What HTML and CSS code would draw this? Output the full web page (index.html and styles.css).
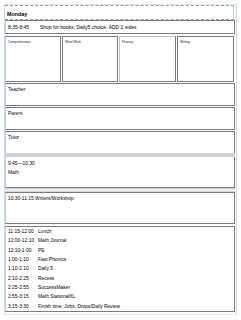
FILE: index.html
```html
<!DOCTYPE html>
<html>
<head>
<meta charset="utf-8">
<link rel="stylesheet" href="styles.css">
</head>
<body>
<div class="page">
  <div class="day">Monday</div>
  <div class="slot"><span class="t">8:35-8:45</span><span>Shop for books, Daily5 choice, ADD 2 sides</span></div>
  <div class="grid">
    <div class="cell">Comprehension</div>
    <div class="cell">Word Work</div>
    <div class="cell light">Fluency</div>
    <div class="cell">Writing</div>
  </div>
  <div class="box note">Teacher</div>
  <div class="box note">Parent</div>
  <div class="box note tutor">Tutor</div>
  <div class="band"></div>
  <div class="box math"><div>9:45—10:30</div><div>Math</div></div>
  <div class="band2"></div>
  <div class="box writers">10:30-11:15 Writers/Workshop</div>
  <div class="box sched">
    <div class="row"><span class="t">11:15-12:00</span><span>Lunch</span></div>
    <div class="row"><span class="t">12:00-12:10</span><span>Math Journal</span></div>
    <div class="row"><span class="t">12:10-1:00</span><span>PE</span></div>
    <div class="row"><span class="t">1:00-1:10</span><span>Fast Phonics</span></div>
    <div class="row"><span class="t">1:10-2:10</span><span>Daily 5</span></div>
    <div class="row"><span class="t">2:10-2:25</span><span>Recess</span></div>
    <div class="row"><span class="t">2:25-2:55</span><span>SuccessMaker</span></div>
    <div class="row"><span class="t">2:55-3:15</span><span>Math StationalXL</span></div>
    <div class="row"><span class="t">3:15-3:30</span><span>Finish time, Jobs, Drops/Daily Review</span></div>
  </div>
</div>
</body>
</html>
```
FILE: styles.css
```css
html, body { margin: 0; padding: 0; background: #fff; }
body { font-family: "Liberation Sans", Arial, sans-serif; color: #000; font-size: 4.9px; }
.page {
  margin: 4px 0 0 4px;
  width: 231px;
  border-left: 1px solid #c9dcef;
  border-right: 1px solid #c9dcef;
  border-top: 1px solid #dbe7f3;
  padding-bottom: 2px;
  border-bottom: 1px solid #dbe7f3;
}
.day {
  height: 15px;
  border-top: 1px dashed #9a9a9a;
  border-bottom: 1px dashed #9a9a9a;
  border-right: 1px dashed #c8c8c8;
  font-weight: bold;
  font-size: 5.4px;
  line-height: 16px;
  padding-left: 2px;
  box-sizing: border-box;
  margin-right: 2px;
}
.slot {
  height: 14px;
  box-sizing: border-box;
  border: 1px solid #7a7a7a;
  border-left-color: #b9cde2;
  display: flex;
  align-items: center;
  padding-left: 2px;
  font-size: 5px;
  margin-right: 1px;
}
.slot .t { width: 32px; }
.grid {
  margin-top: 2px;
  display: grid;
  grid-template-columns: 56px 56px 57px 57px;
  gap: 1px;
  height: 46px;
  margin-right: 1px;
}
.cell {
  border: 1px solid #7a7a7a;
  font-size: 3.2px;
  padding: 3px 2px;
  color: #222;
}
.cell:first-child { border-left-color: #b9cde2; }
.cell.light { border-color: #c4c4c4 #7a7a7a #7a7a7a #c4c4c4; }
.box {
  box-sizing: border-box;
  border: 1px solid #7a7a7a;
  border-left-color: #b9cde2;
  padding: 3px 2px;
  margin-right: 1px;
}
.note { height: 23px; margin-top: 1px; }
.tutor { height: 22px; border-bottom: none; }
.band { height: 4px; background: #d3d3d3; margin-right: 1px; }
.math { height: 31px; border-top: none; padding-top: 2px; line-height: 9px; }
.band2 {
  height: 4px;
  margin-right: 1px;
  border-top: 1px solid #cfcfcf;
  border-bottom: 1px solid #d8d8d8;
  box-sizing: border-box;
  background: #eee;
}
.writers { height: 32px; padding-top: 3px; }
.sched { margin-top: 2px; height: 86px; padding-top: 0; }
.row { display: flex; height: 9.3px; align-items: center; }
.row .t { min-width: 29px; margin-right: 1px; }
```
